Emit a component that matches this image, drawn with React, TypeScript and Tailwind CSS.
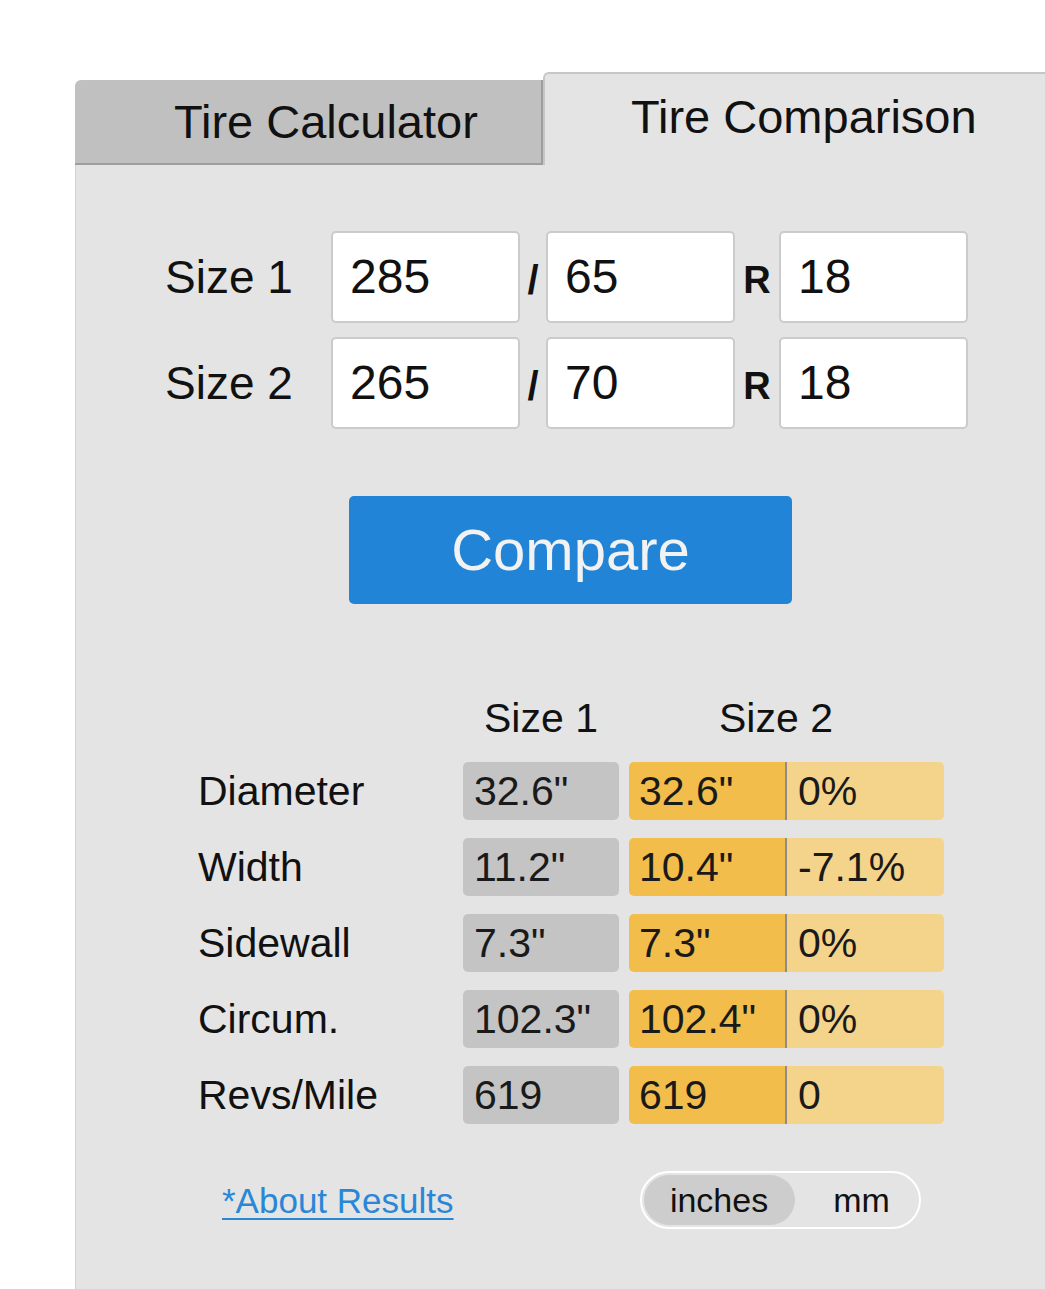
const SIZES = [
  { label: "Size 1", width: "285", ratio: "65", rim: "18" },
  { label: "Size 2", width: "265", ratio: "70", rim: "18" },
];

const RESULTS = [
  { label: "Diameter", a: '32.6"', b: '32.6"', diff: "0%" },
  { label: "Width", a: '11.2"', b: '10.4"', diff: "-7.1%" },
  { label: "Sidewall", a: '7.3"', b: '7.3"', diff: "0%" },
  { label: "Circum.", a: '102.3"', b: '102.4"', diff: "0%" },
  { label: "Revs/Mile", a: "619", b: "619", diff: "0" },
];

function SizeBox({ value }: { value: string }) {
  return (
    <div className="flex h-[92px] w-[189px] items-center rounded-[5px] border-2 border-[#cbcbcb] bg-white pl-[17px] text-[48px] leading-none text-[#111]">
      {value}
    </div>
  );
}

export default function App() {
  return (
    <div className="min-h-screen bg-white pl-[75px] pt-[72px] font-['Liberation_Sans',Arial,sans-serif] text-[#111]">
      {/* tabs */}
      <div className="flex items-end">
        <div className="flex h-[85px] w-[468px] items-center rounded-tl-[6px] border-b-2 border-r-2 border-[#9e9e9e] bg-[#c0c0c0] pl-[99px] text-[47px] leading-none">
          Tire Calculator
        </div>
        <div className="flex h-[93px] flex-1 items-center rounded-tl-[6px] border-l-2 border-t-2 border-[#c6c6c6] bg-[#e4e4e4] pb-[6px] pl-[86px] text-[47px] leading-none">
          Tire Comparison
        </div>
      </div>

      <div className="min-h-[1124px] border-l border-[#d2d2d2] bg-[#e4e4e4] pt-[66px]">
        {/* size inputs */}
        <div className="ml-[89px] flex flex-col gap-[14px]">
          {SIZES.map((s) => (
            <div key={s.label} className="flex items-center">
              <div className="w-[166px] text-[46px] leading-none">{s.label}</div>
              <SizeBox value={s.width} />
              <div className="w-[26px] pt-[5px] text-center text-[40px] font-bold leading-none">/</div>
              <SizeBox value={s.ratio} />
              <div className="w-[44px] pt-[6px] text-center text-[38px] font-bold leading-none">R</div>
              <SizeBox value={s.rim} />
            </div>
          ))}
        </div>

        <div className="ml-[273px] mt-[67px] flex h-[108px] w-[443px] items-center justify-center rounded-[5px] bg-[#2284d6] text-[58px] leading-none text-[#f2f2f2]">
          Compare
        </div>

        {/* results */}
        <div className="ml-[122px] mt-[94px]">
          <div className="flex text-[41px] leading-none">
            <div className="w-[265px]" />
            <div className="w-[156px] pl-[21px]">Size 1</div>
            <div className="ml-[10px] w-[315px] pl-[90px]">Size 2</div>
          </div>
          <div className="mt-[23px] flex flex-col gap-[18px]">
            {RESULTS.map((r) => (
              <div key={r.label} className="flex h-[58px] items-center text-[41px] leading-none">
                <div className="w-[265px]">{r.label}</div>
                <div className="flex h-full w-[156px] items-center rounded-[5px] bg-[#c4c4c4] pl-[11px] text-[#1a1a1a]">
                  {r.a}
                </div>
                <div className="ml-[10px] flex h-full w-[315px] overflow-hidden rounded-[5px] text-[#1a1a1a]">
                  <div className="flex w-[156px] items-center bg-[#f2bd4b] pl-[10px]">{r.b}</div>
                  <div className="w-[2px] bg-[#8c8c8c]" />
                  <div className="flex flex-1 items-center bg-[#f4d38b] pl-[11px]">{r.diff}</div>
                </div>
              </div>
            ))}
          </div>
        </div>

        {/* footer */}
        <div className="mt-[47px] flex items-center">
          <a href="#about" className="ml-[146px] text-[35px] leading-none text-[#2a87d8] underline decoration-2 underline-offset-[5px]">
            *About Results
          </a>
          <div className="ml-[186px] flex h-[58px] w-[281px] items-center rounded-full border-2 border-white p-[2px] text-[34px] leading-none">
            <div className="flex h-full w-[151px] items-center justify-center rounded-full bg-[#cdcdcd]">inches</div>
            <div className="flex flex-1 items-center justify-center pl-[12px]">mm</div>
          </div>
        </div>
      </div>
    </div>
  );
}
